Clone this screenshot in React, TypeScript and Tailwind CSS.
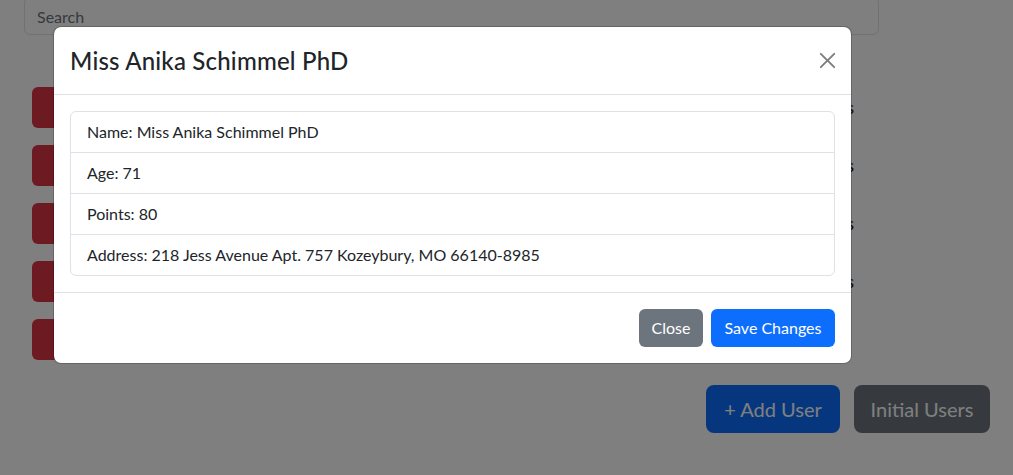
import React from "react";

const rows = ["80 points", "65 points", "42 points", "37 points", ""];

export default function App() {
  return (
    <div className="relative h-[475px] w-[1013px] overflow-hidden bg-white font-['Lato',sans-serif] text-[#212529]">
      {/* page behind */}
      <div className="flex flex-col pl-[24px]">
        <input
          placeholder="Search"
          className="mt-[-3px] h-[38px] w-[855px] rounded-[6px] border border-[#dee2e6] px-[12px] text-[16px] placeholder:text-[#6c757d]"
        />
        <div className="mt-[52px] flex w-[830px] flex-col gap-[17px] pl-[8px]">
          {rows.map((r, i) => (
            <div key={i} className="flex h-[41px] items-center justify-between">
              <button aria-label="Delete" className="h-[41px] w-[100px] rounded-[6px] bg-[#dc3545]" />
              <span className="text-[18px] font-medium">{r}</span>
            </div>
          ))}
        </div>
        <div className="mt-[25px] flex w-[966px] justify-end gap-[14px]">
          <button className="h-[48px] w-[134px] rounded-[8px] bg-[#0d6efd] text-[20px] text-white">+ Add User</button>
          <button className="h-[48px] w-[136px] rounded-[8px] bg-[#6c757d] text-[20px] text-white">Initial Users</button>
        </div>
      </div>

      {/* backdrop + modal */}
      <div className="absolute inset-0 bg-black/50 pl-[53px] pt-[26px]">
        <div className="w-[799px] rounded-[8px] border border-black/20 bg-white bg-clip-padding">
          <div className="flex items-center justify-between border-b border-[#dee2e6] px-[16px] py-[16px]">
            <div className="text-[24px] font-medium leading-[35px] tracking-[0.2px]">Miss Anika Schimmel PhD</div>
            <button className="mr-[-4px] flex h-[24px] w-[24px] items-center justify-center opacity-50">
              <svg width="17" height="17" viewBox="0 0 16 16" fill="#000">
                <path
                  d="M.293.293a1 1 0 0 1 1.414 0L8 6.586 14.293.293a1 1 0 1 1 1.414 1.414L9.414 8l6.293 6.293a1 1 0 0 1-1.414 1.414L8 9.414l-6.293 6.293a1 1 0 0 1-1.414-1.414L6.586 8 .293 1.707a1 1 0 0 1 0-1.414z"
                  transform="translate(8 8) scale(0.9) translate(-8 -8)"
                />
              </svg>
            </button>
          </div>
          <div className="p-[16px]">
            <ul className="rounded-[6px] border border-[#dee2e6] text-[16px] leading-[24px]">
              <li className="border-b border-[#dee2e6] px-[16px] py-[8px]">Name: Miss Anika Schimmel PhD</li>
              <li className="border-b border-[#dee2e6] px-[16px] py-[8px]">Age: 71</li>
              <li className="border-b border-[#dee2e6] px-[16px] py-[8px]">Points: 80</li>
              <li className="px-[16px] py-[8px]">Address: 218 Jess Avenue Apt. 757 Kozeybury, MO 66140-8985</li>
            </ul>
          </div>
          <div className="flex justify-end gap-[8px] border-t border-[#dee2e6] px-[16px] pb-[16px] pt-[16px]">
            <button className="h-[38px] w-[64px] rounded-[6px] bg-[#6c757d] text-[16px] text-white">Close</button>
            <button className="h-[38px] w-[124px] rounded-[6px] bg-[#0d6efd] text-[16px] text-white">Save Changes</button>
          </div>
        </div>
      </div>
    </div>
  );
}
